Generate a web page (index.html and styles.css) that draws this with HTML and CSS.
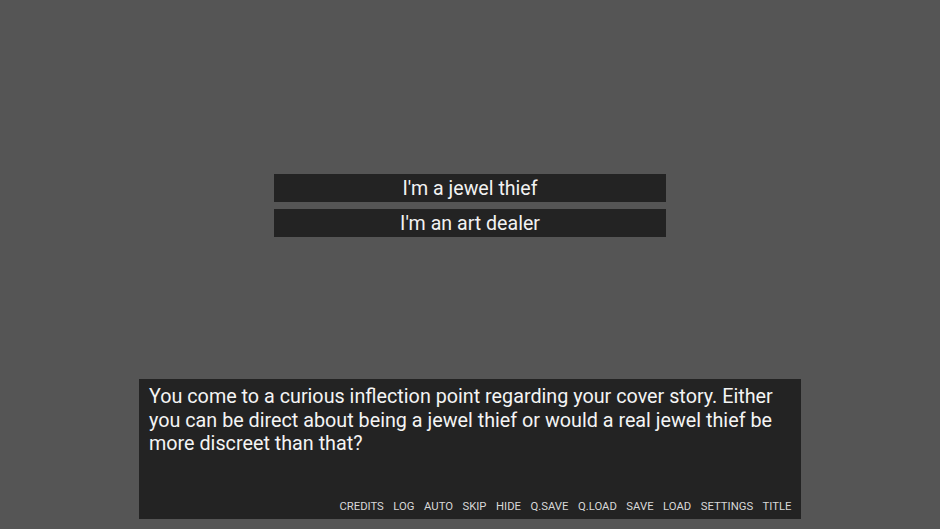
FILE: index.html
```html
<!DOCTYPE html>
<html>
<head>
<meta charset="utf-8">
<link rel="stylesheet" href="styles.css">
</head>
<body>
<div class="screen">
  <div class="choices">
    <div class="choice">I'm a jewel thief</div>
    <div class="choice">I'm an art dealer</div>
  </div>
  <div class="dialogue">
    <p class="say">You come to a curious inflection point regarding your cover story. Either you can be direct about being a jewel thief or would a real jewel thief be more discreet than that?</p>
    <nav class="quick">
      <span>CREDITS</span>
      <span>LOG</span>
      <span>AUTO</span>
      <span>SKIP</span>
      <span>HIDE</span>
      <span>Q.SAVE</span>
      <span>Q.LOAD</span>
      <span>SAVE</span>
      <span>LOAD</span>
      <span>SETTINGS</span>
      <span>TITLE</span>
    </nav>
  </div>
</div>
</body>
</html>
```

FILE: styles.css
```css
html, body {
  margin: 0;
  padding: 0;
  background: #555555;
  font-family: Roboto, "Noto Sans", sans-serif;
}
.screen {
  width: 940px;
  height: 529px;
  display: flex;
  flex-direction: column;
  box-sizing: border-box;
  padding-top: 174px;
  padding-bottom: 10px;
}
.choices {
  display: flex;
  flex-direction: column;
  align-items: center;
  gap: 7px;
}
.choice {
  width: 392px;
  height: 28px;
  background: #232323;
  color: #f2f2f2;
  font-size: 19.6px;
  line-height: 29px;
  text-align: center;
}
.dialogue {
  margin-top: auto;
  margin-left: 139px;
  width: 662px;
  height: 140px;
  background: #232323;
  display: flex;
  flex-direction: column;
  box-sizing: border-box;
  padding: 6px 9px 5px 10px;
}
.say {
  margin: 0;
  color: #f4f4f4;
  font-size: 19.75px;
  line-height: 23.5px;
}
.quick {
  margin-top: auto;
  display: flex;
  justify-content: flex-end;
  gap: 9.5px;
  padding-right: 0.5px;
  color: #d8d8d8;
  font-size: 11.3px;
  line-height: 14px;
}
```
